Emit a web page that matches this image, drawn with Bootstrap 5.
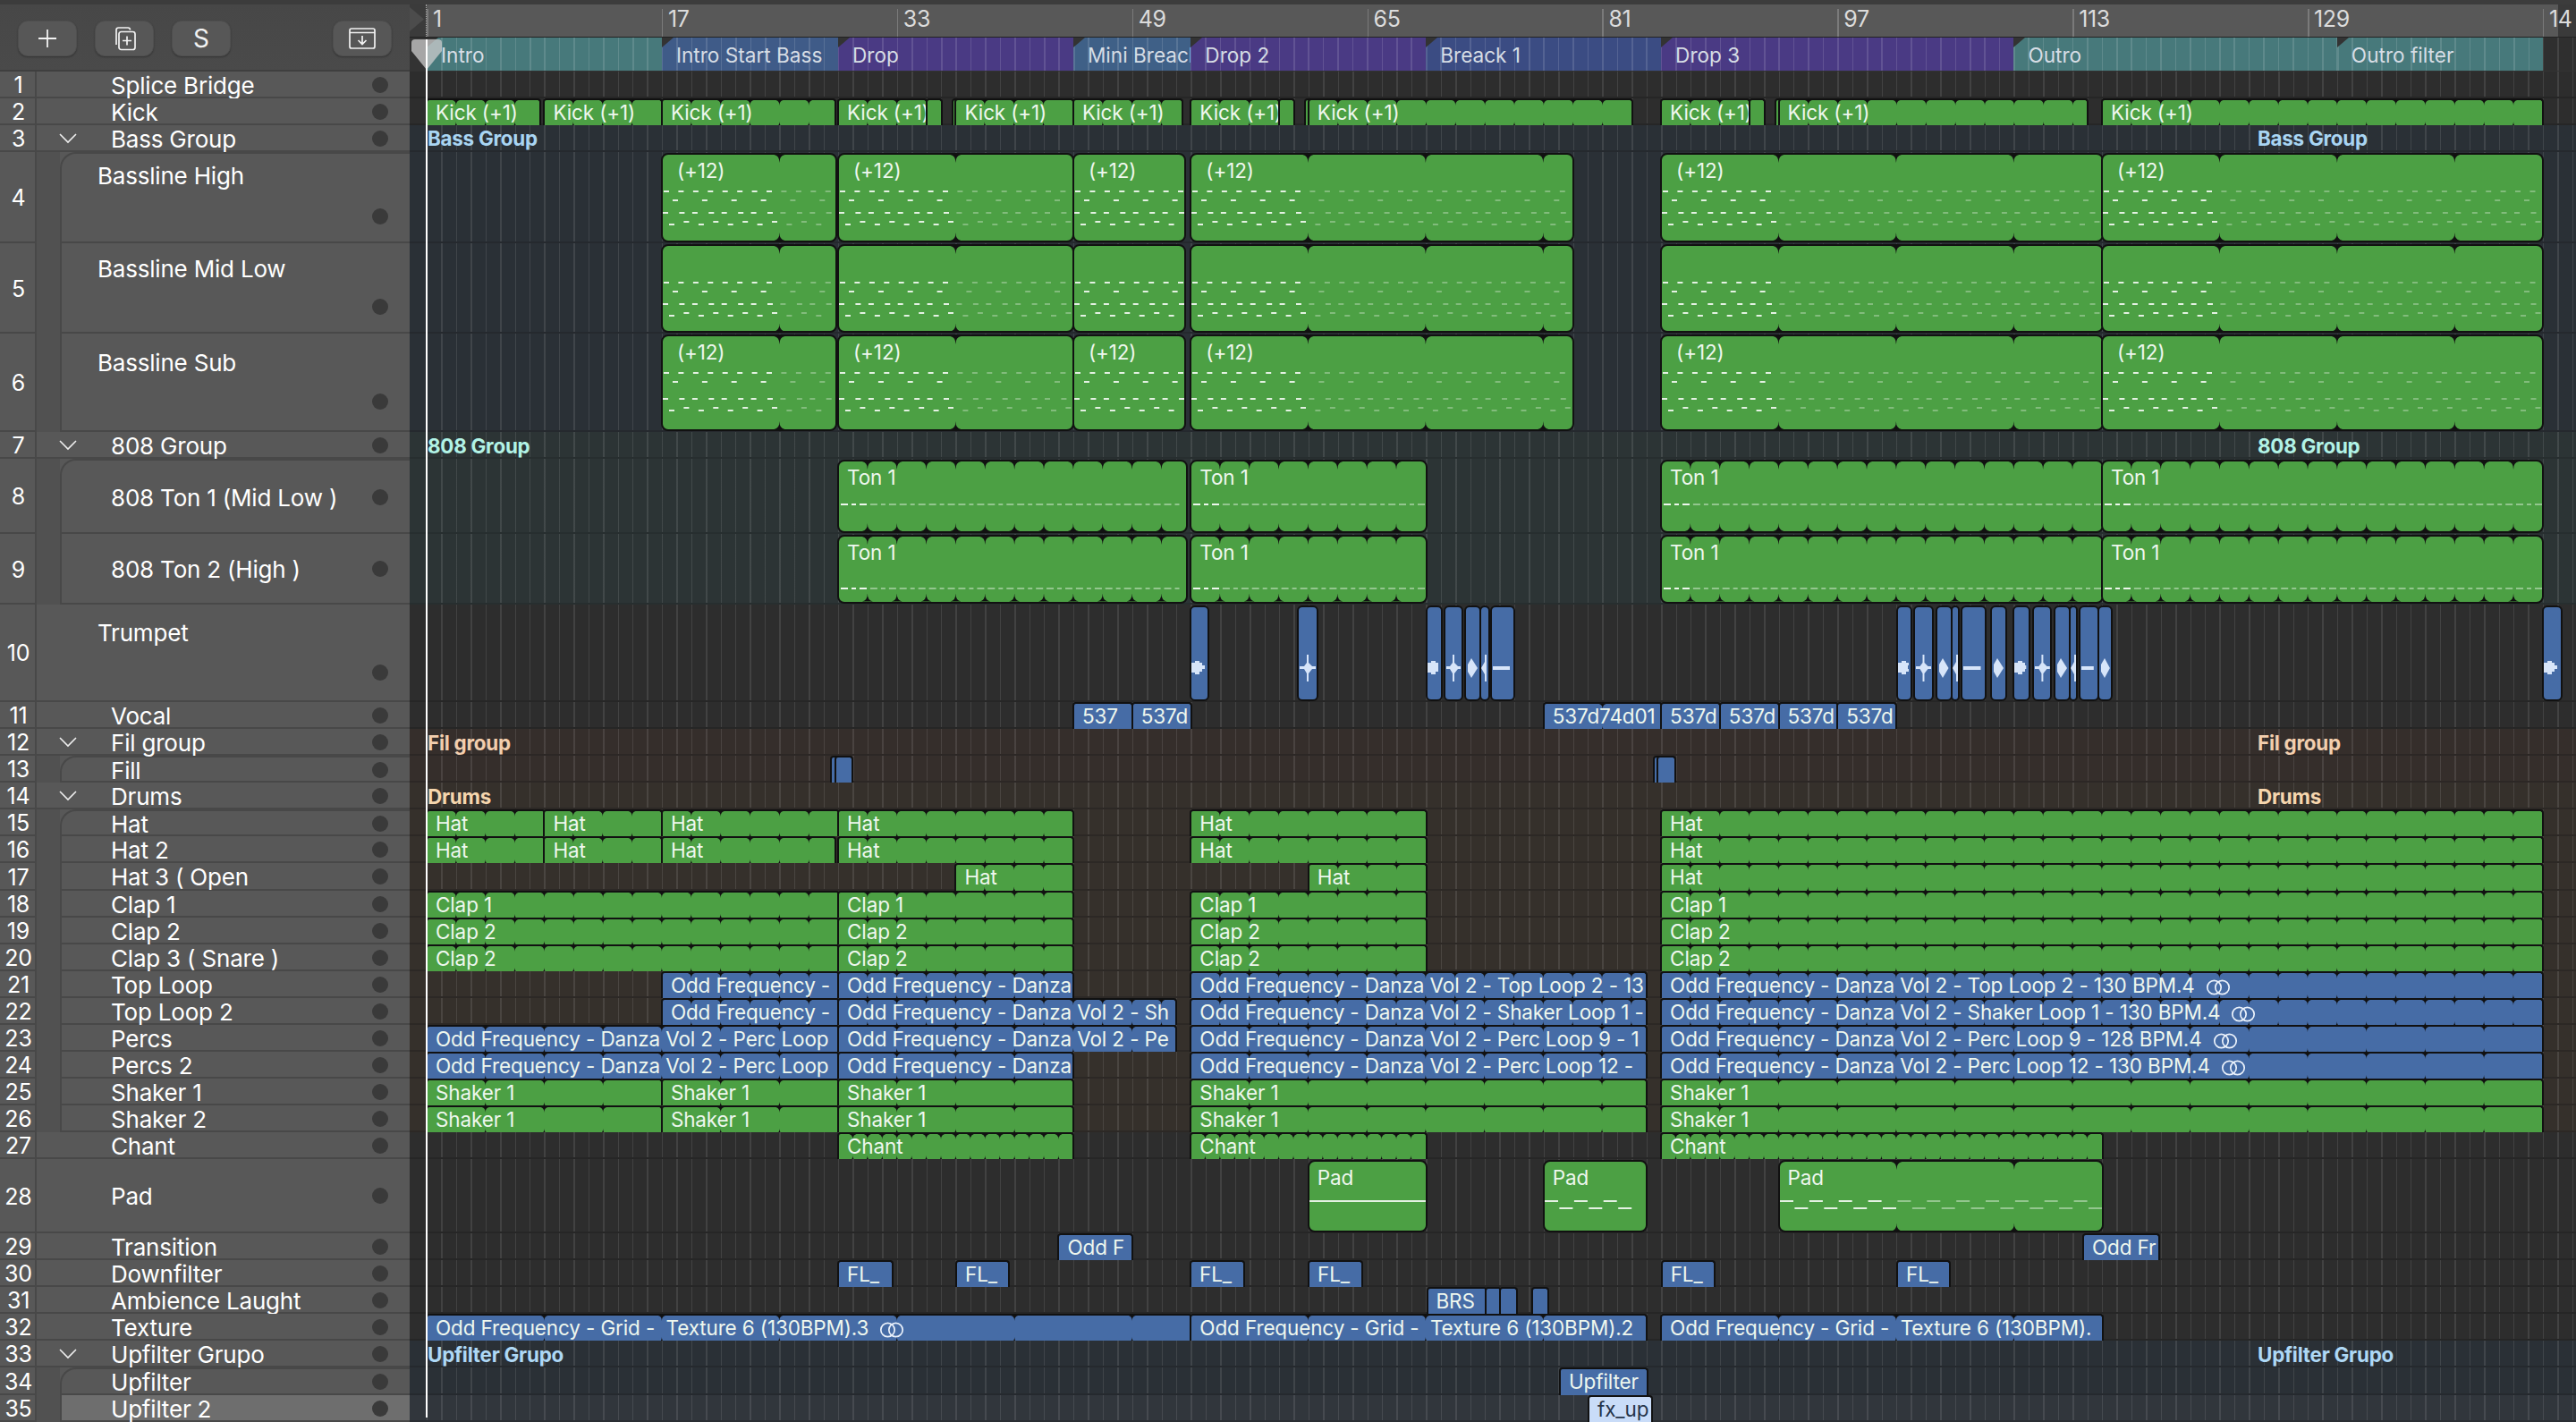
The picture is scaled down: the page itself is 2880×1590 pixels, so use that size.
<!doctype html>
<html lang="en"><head><meta charset="utf-8"><title>Arrangement</title>
<link href="https://cdn.jsdelivr.net/npm/bootstrap@5.3.0/dist/css/bootstrap.min.css" rel="stylesheet">
<style>
html,body{margin:0;background:#2d2d2d}
body{width:2880px;height:1590px;overflow:hidden;font-family:Inter,"Liberation Sans",sans-serif;color:#fff}
.app{width:2880px;height:1590px}
.side{width:458px;background:#585858}
.side-head{height:80px;background:linear-gradient(#474747,#4a4a4a);border-top:5px solid #3c3c3c;padding:0 20px;box-shadow:inset 0 -2px 0 #3f3f3f}
.tool-btn{width:66px;height:40px;background:#575757;border:1px solid #4f4f4f;border-radius:11px;box-shadow:0 1px 2px rgba(0,0,0,.3);color:#f2f2f2;font-size:28px;padding:0;line-height:1;--bs-btn-hover-bg:#575757}
.tool-gap{gap:20px}
.trk{font-size:26px;letter-spacing:-.2px}
.tk-num{width:41px;box-shadow:inset -2px -2px 0 #484848;flex:0 0 41px;font-size:25px;padding-top:2px}
.tk-band{width:26px;flex:0 0 26px;background:#515151}
.tk-body{padding-right:24px;box-shadow:inset 0 -2px 0 #484848;min-width:0;background:#585858}
.tk-kid{border-left:2px solid #484848;padding-left:55px}
.tk-kid.tk-top{border-top:2px solid #484848;border-top-left-radius:18px}
.tk-root{padding-left:83px;position:relative}
.tk-tall{padding-left:40px}
.tk-free{padding-left:68px}
.tk-name{white-space:nowrap;line-height:30px;padding-top:2px}
.tk-dot{width:18px;height:18px;border-radius:50%;background:#3a3a3a;flex:0 0 18px}
.tk-chev{position:absolute;left:25px;top:50%;margin-top:-6px}
.tk-sel{background:#6e6e6e}
.arr{width:2422px;overflow:hidden}
.rulerbar{height:42px;background:#585858;border-top:5px solid #3c3c3c;border-bottom:1px solid #222;padding-left:19px;position:relative}
.ruler-pad{position:absolute;left:0;top:0;bottom:0;width:19px;background:#3b3b3b;border-right:1px dotted #aaa}
.ruler-tri{position:absolute;left:0;top:3px}
.ruler-end{position:absolute;right:0;top:0;bottom:0;width:20px;background:#3a3a3a}
.tick{flex:0 0 262.88px;font-size:25px;color:#dcdcdc;padding-left:7px;line-height:32px;position:relative;letter-spacing:-.3px;white-space:nowrap}
.tick::before{content:"";position:absolute;left:0;top:5px;bottom:0;width:1.5px;background:#7a7a7a}
.markers{height:38px;padding-left:19px;background:#2f2f2f repeating-linear-gradient(90deg,transparent 0 2.57px,rgba(255,255,255,.1) 2.57px 4px,transparent 4px 16.43px);box-shadow:inset 19px 0 0 #333,inset 0 -1px 0 #333}
.mk{position:relative;overflow:hidden;flex:0 0 auto;height:37px;line-height:39px;padding-left:16px;font-size:22.6px;color:#d6dde5;white-space:nowrap;background-image:repeating-linear-gradient(90deg,rgba(255,255,255,.13) 0 1.5px,transparent 1.5px 16.43px)}
.mk::before{content:"";position:absolute;left:0;top:0;border-top:11px solid #333;border-right:13px solid transparent}
.mk-teal{background-color:#47797b}.mk-blue{background-color:#3f5b88}.mk-purple{background-color:#4a3a84}.mk-slate{background-color:#3f6087}.mk-ind{background-color:#3b4c83}
.lane{position:relative;--tint:#2d2d2d;--sep:#262626;background:linear-gradient(90deg,var(--tint) 19px,transparent 19px),repeating-linear-gradient(90deg,transparent 0 2.57px,rgba(255,255,255,.1) 2.57px 4px,transparent 4px 16.43px),var(--tint);box-shadow:inset 0 -2px 0 var(--sep)}
.lane-bass{--tint:#2a3036;--sep:#25292e}
.lane-eight{--tint:#2c3435;--sep:#272e2f}
.lane-fil{--tint:#352e2b;--sep:#2c2725}
.lane-drum{--tint:#35302b;--sep:#2c2825}
.lane-sel{--tint:#31363c;--sep:#2a2e33}
.lane-tag{position:absolute;top:1px;bottom:0;display:flex;align-items:center;font-size:22.4px;font-weight:700;white-space:nowrap;letter-spacing:-.25px}
.clip{position:absolute;top:0;bottom:0;overflow:hidden;border:2px solid #111;border-bottom:0;border-radius:4px 4px 0 0;font-size:22.5px;line-height:27px;color:#eef7ee;white-space:pre;padding-left:9px;letter-spacing:-.13px}
.clip-g{background:#4ca044}
.clip-b{background:#466ca6}
.clip-s{background:#c9dcf8;color:#26344a}
.clip-t{top:1px;bottom:1px;border-bottom:2px solid #111;border-radius:8px;padding-left:16px;line-height:36px}
.clip-near{padding-left:9px}
.clip-a{border-radius:6px;padding:0;top:1px;bottom:1px;border-bottom:2px solid #111}
.clip svg.ov{position:absolute;left:0;top:0;width:100%;height:100%}
.clip span{position:relative}
.loopmark{display:inline-block;vertical-align:-3px;margin-left:12px}
.playhead{position:absolute;left:18px;top:44px;width:2px;height:1541px;background:#fff;z-index:5}
.playcap{position:absolute;left:2px;top:44px;z-index:4}
</style></head>
<body>
<div class="app d-flex">
  <aside class="side flex-shrink-0" id="side">
    <div class="side-head d-flex align-items-center tool-gap">
      <button class="btn tool-btn d-flex align-items-center justify-content-center" type="button"><svg width="22" height="22" viewBox="0 0 22 22"><path d="M11 1v20M1 11h20" stroke="#f2f2f2" stroke-width="1.8"/></svg></button>
      <button class="btn tool-btn d-flex align-items-center justify-content-center" type="button"><svg width="28" height="28" viewBox="0 0 28 28" fill="none" stroke="#f2f2f2" stroke-width="1.7"><path d="M5 21V4.5Q5 2 7.5 2H18Q20.5 2 20.5 4.5"/><rect x="8" y="6.5" width="18" height="20" rx="2.5" fill="#575757"/><path d="M17 11.5v10M12 16.5h10"/></svg></button>
      <button class="btn tool-btn d-flex align-items-center justify-content-center" type="button">S</button>
      <button class="btn tool-btn d-flex align-items-center justify-content-center ms-auto" type="button"><svg width="32" height="26" viewBox="0 0 32 26" fill="none" stroke="#f2f2f2" stroke-width="1.7"><rect x="2" y="2" width="28" height="22" rx="2"/><path d="M2 6.5h28M16 10v9M11.5 15l4.5 4.5 4.5-4.5"/></svg></button>
    </div>
  </aside>
  <main class="arr position-relative" id="arr">
    <div class="rulerbar d-flex" id="ruler"><div class="ruler-pad"></div><svg class="ruler-tri" width="16" height="27" viewBox="0 0 16 27"><path d="M0 0L16 13.5 0 27Z" fill="#4c4c4c"/></svg><div class="ruler-end"></div></div>
    <div class="markers d-flex" id="markers"></div>
    <svg class="playcap" width="34" height="34" viewBox="0 0 34 34"><path d="M4 0H30Q34 0 34 4V13L17 34 0 13V4Q0 0 4 0Z" fill="rgba(205,205,205,.75)"/></svg>
    <div class="playhead"></div>
  </main>
</div>
<script>
const BAR=16.43, bx=v=>v>146?v-458:19+(v-1)*BAR;
const E=[80,109.5,139.5,169.5,271.5,373,483,513,597,675.5,784.5,815,845,875,905,935,965,995.5,1025.5,1055.5,1085.5,1115.5,1145.5,1175.5,1205.5,1235.5,1265.5,1295.5,1379,1409,1439,1469,1499,1529,1559.5,1589.5];
const T=[
['Splice Bridge'],['Kick'],['Bass Group','g'],['Bassline High','kt',8,21],['Bassline Mid Low','k',12,21],['Bassline Sub','k',16,25],
['808 Group','g'],['808 Ton 1 (Mid Low )','kt0'],['808 Ton 2 (High )','k0'],['Trumpet','t',15,24],['Vocal'],['Fil group','g'],['Fill','kt0'],
['Drums','g'],['Hat','kt0'],['Hat 2','k0'],['Hat 3 ( Open','k0'],['Clap 1','k0'],['Clap 2','k0'],['Clap 3 ( Snare )','k0'],['Top Loop','k0'],['Top Loop 2','k0'],
['Percs','k0'],['Percs 2','k0'],['Shaker 1','k0'],['Shaker 2','k0'],['Chant'],['Pad'],['Transition'],['Downfilter'],['Ambience Laught'],['Texture'],
['Upfilter Grupo','g'],['Upfilter','kt0'],['Upfilter 2','k0s']];
const chev='<svg class="tk-chev" width="20" height="12" viewBox="0 0 20 12"><path d="M1 1l9 9 9-9" fill="none" stroke="#eee" stroke-width="1.6"/></svg>';
let sh='';
T.forEach((t,i)=>{
  const h=E[i+1]-E[i], k=t[1]||'', kid=k[0]==='k';
  const nameSt=t[2]?` style="align-self:flex-start;margin-top:${t[2]}px"`:'';
  const dotSt=t[3]?` style="align-self:flex-end;margin-bottom:${t[3]}px"`:'';
  let bodyCls=kid?'tk-kid':'tk-root';
  if(k==='t')bodyCls='tk-free';
  if(k==='kt'||k==='kt0')bodyCls+=' tk-top';
  if(k==='kt'||k==='k')bodyCls+=' tk-tall';
  if(k==='k0s')bodyCls+=' tk-sel';
  sh+=`<div class="trk d-flex" style="height:${h}px"><div class="tk-num d-flex align-items-center justify-content-center">${i+1}</div>${kid?'<div class="tk-band"></div>':''}<div class="tk-body flex-grow-1 d-flex align-items-center ${bodyCls}">${k==='g'?chev:''}<span class="tk-name"${nameSt}>${t[0]}</span><span class="tk-dot ms-auto"${dotSt}></span></div></div>`;
});
document.getElementById('side').insertAdjacentHTML('beforeend',sh);

const rul=document.getElementById('ruler');
[1,17,33,49,65,81,97,113,129,'14'].forEach(n=>rul.insertAdjacentHTML('beforeend',`<div class="tick">${n}</div>`));
const mkr=document.getElementById('markers');
[['Intro',1,17,'teal'],['Intro Start Bass',17,29,'blue'],['Drop',29,45,'purple'],['Mini Breack',45,53,'slate'],['Drop 2',53,69,'purple'],['Breack 1',69,85,'ind'],['Drop 3',85,109,'purple'],['Outro',109,131,'teal'],['Outro filter',131,145,'teal']]
.forEach(m=>mkr.insertAdjacentHTML('beforeend',`<div class="mk mk-${m[3]}" style="width:${(m[2]-m[1])*BAR}px">${m[0]}</div>`));

const OF='Odd Frequency - Danza Vol 2 - ', GR='Odd Frequency - Grid -  Texture 6 (130BPM)';
const full4=[[1,17],[17,29],[29,45],[53,84],[85,145]];
const BASS=[[17,935],[29,45],[45,1325],[53,79],[85,115],[115,145]];
const TON=[[29,1327],[53,69],[85,115],[115,145]];
const HAT=[[1,9],[9,17],[17,29],[29,45],[53,69],[85,145]];
const CL=[[1,29],[29,45],[53,69],[85,145]];
const L={
2:{c:'g',p:2,t:'Kick (+1)',r:[[1,603],[9,17],[17,934],[29,35],[35,36,''],[1065,1069,''],[37,45],[45,1322],[53,59],[59,60,''],[1459,1463,''],[61,83],[85,91],[91,92,''],[1985,1989,''],[93,114],[115,145]]},
3:{tag:['Bass Group','#a9d5f3']},
4:{c:'g',p:8,t:'(+12)',tall:1,d:'bass',r:BASS,lift:0},
5:{c:'g',p:8,t:'',tall:1,d:'bass',r:BASS,lift:0},
6:{c:'g',p:8,t:'(+12)',tall:1,d:'bass',r:BASS,lift:5},
7:{tag:['808 Group','#b2f3e6']},
8:{c:'g',p:2,t:'Ton 1',tall:1,near:1,d:'ton',r:TON,dy:47},
9:{c:'g',p:2,t:'Ton 1',tall:1,near:1,d:'ton',r:TON,dy:57},
10:{c:'b',audio:[[1331,1351,'blob'],[1451,1473,'star'],[1595,1612,'blob'],[1615,1635,'star'],[1638,1655,'dia'],[1655,1665,'spike'],[1667,1693,'line'],[2121,2137,'blob'],[2140,2161,'star'],[2165,2181.5,'dia'],[2181.5,2190,'spike'],[2193,2219.5,'line'],[2226,2243,'dia'],[2250.7,2269,'blob'],[2272.7,2293.5,'star'],[2296.6,2313.7,'dia'],[2313.7,2322,'spike'],[2324.8,2345.6,'line'],[2345.6,2361.5,'dia'],[2843,2863.7,'blob']]},
11:{c:'b',p:4,t:'537d',r:[[45,49,'537'],[49,53],[77,85,'537d74d01'],[85,89],[89,93],[93,97],[97,101]]},
12:{tag:['Fil group','#f2ceae'],fil:1},
13:{c:'b',r:[[929,934,''],[934,952,''],[1848.5,1853,''],[1853,1872,'']],fil:1},
14:{tag:['Drums','#f5d6ae']},
15:{c:'g',p:2,t:'Hat',r:HAT},
16:{c:'g',p:2,t:'Hat',r:[[1,9],[9,17],[17,934],[29,45],[53,69],[85,145]]},
17:{c:'g',p:2,t:'Hat',r:[[37,45],[61,69],[85,145]]},
18:{c:'g',p:2,t:'Clap 1',r:CL},
19:{c:'g',p:2,t:'Clap 2',r:CL},
20:{c:'g',p:2,t:'Clap 2',r:CL},
21:{c:'b',p:2,r:[[17,29,'Odd Frequency - '],[29,45,'Odd Frequency - Danza'],[53,84,OF+'Top Loop 2 - 13'],[85,145,OF+'Top Loop 2 - 130 BPM.4',1]]},
22:{c:'b',p:2,r:[[17,29,'Odd Frequency - '],[29,52,OF+'Sh'],[53,84,OF+'Shaker Loop 1 -'],[85,145,OF+'Shaker Loop 1 - 130 BPM.4',1]]},
23:{c:'b',p:4,r:[[1,29,OF+'Perc Loop'],[29,52,OF+'Pe'],[53,84,OF+'Perc Loop 9 - 1'],[85,145,OF+'Perc Loop 9 - 128 BPM.4',1]]},
24:{c:'b',p:4,r:[[1,29,OF+'Perc Loop'],[29,45,'Odd Frequency - Danza'],[53,84,OF+'Perc Loop 12 - '],[85,145,OF+'Perc Loop 12 - 130 BPM.4',1]]},
25:{c:'g',p:4,t:'Shaker 1',r:full4},
26:{c:'g',p:4,t:'Shaker 1',r:full4},
27:{c:'g',p:1,t:'Chant',r:[[29,45],[53,69],[85,115]]},
28:{c:'g',p:8,t:'Pad',tall:1,near:1,d:'pad',r:[[61,69,undefined,0,'solid'],[77,84],[93,115]]},
29:{c:'b',r:[[44,49,'Odd F'],[2329,2413,'Odd Fr']]},
30:{c:'b',t:'FL_',r:[[937,997],[1069,1127],[1331,1390.5],[1463,1522],[1857.7,1916.5],[2121,2179]]},
31:{c:'b',r:[[1595.5,1661,'BRS'],[1661,1677,''],[1677,1695,''],[1713,1730,'']]},
32:{c:'b',p:8,r:[[1,53,GR+'.3',1],[53,84,GR+'.2'],[85,115,GR+'.']]},
33:{tag:['Upfilter Grupo','#aed8f5']},
34:{c:'b',r:[[1744,1841,'Upfilter']]},
35:{c:'s',r:[[1776,1846,'fx_up']]}
};
function notch(x,h,big){
  const w=big?6:4,d=big?9:6;
  return `<path d="M${x-w} 0Q${x} 1 ${x} ${d}Q${x} 1 ${x+w} 0Z" fill="#111"/><path d="M${x-w} ${h}Q${x} ${h-1} ${x} ${h-d}Q${x} ${h-1} ${x+w} ${h}Z" fill="#111"/>`;
}
function dash(x,y,w,o,h){return `<rect x="${x.toFixed(1)}" y="${y}" width="${w}" height="${h||2}" fill="#fff" opacity="${o}"/>`;}
function midiBass(w,per,lift){
  let s='';const n=Math.ceil(w/BAR);
  for(let i=0;i<n;i++){
    const o=i<per?.85:.3,x=i*BAR;
    if(x+8<w)s+=dash(x+1,40,6,o);
    if(i%2==0&&x+18<w)s+=dash(x+11,50,6,o);
    if(x+8<w)s+=dash(x+(i%2?2:0),64+lift,6,o);
    if(x+14<w)s+=dash(x+7,74+lift+(i%2?0:3),6,o);
  }
  return s;
}
function midiTon(w,dy){
  let s='';const per=32.86;
  for(let k=0;k*per<w;k++){
    const o=k==0?.9:.4,x=k*per;
    [[0,8],[12,5],[21,8]].forEach(a=>{if(x+a[0]+a[1]<w)s+=dash(x+a[0]+2,dy,a[1],o);});
  }
  return s;
}
function midiPad(w,solid){
  if(solid)return dash(0,43,w,.85);
  let s='';
  for(let i=0;i*BAR<w;i++){const o=i<8?.85:.4,x=i*BAR;
    if(i%2==0){if(x+15<w)s+=dash(x,43,15,o);}else{if(x<w)s+=dash(x,51,Math.min(15,w-x),o);}}
  return s;
}
function wave(t,w){
  const c=68,f='#d7e5f9';
  const m={blob:`M0 ${c-6}H4V${c-8}H9V${c-6}H12V${c-3}H${Math.min(w-3,15)}V${c+1}H12V${c+4}H9V${c+7}H4V${c+5}H0Z`,
   star:`M${w/2-1} ${c-15}H${w/2+1}V${c-6}L${w/2+5} ${c-2}H${w-1}V${c+1}H${w/2+5}L${w/2+1} ${c+6}V${c+15}H${w/2-1}V${c+6}L${w/2-4} ${c+1}H1V${c-2}H${w/2-4}L${w/2-1} ${c-6}Z`,
   dia:`M2 ${c-4}L6 ${c-11}L${Math.min(w-2,13)} ${c}L6 ${c+11}L2 ${c+4}Z`,
   spike:`M0 ${c}L4 ${c-7}V${c-15}H6V${c+15}H4V${c+7}Z`,
   line:`M1 ${c-2}H${w-4}V${c+2}H1Z`};
  return `<path d="${m[t]}" fill="${f}"/>`;
}
const loopSvg='<svg class="loopmark" width="28" height="18" viewBox="0 0 28 18" fill="none" stroke="#eaf1fb" stroke-width="1.7"><circle cx="9.5" cy="9" r="7.7"/><circle cx="18.5" cy="9" r="7.7"/></svg>';
let out='';
T.forEach((t,i)=>{
  const n=i+1,h=E[i+1]-E[i],cfg=L[n]||{};
  let cl='lane';
  if(n>=3&&n<=6||n>=33&&n<=34)cl+=' lane-bass';
  if(n>=7&&n<=9)cl+=' lane-eight';
  if(n==12||n==13)cl+=' lane-fil';
  if(n>=14&&n<=26)cl+=' lane-drum';
  if(n==35)cl+=' lane-sel';
  let inner='';
  if(cfg.tag){[20,2066].forEach(x=>{inner+=`<div class="lane-tag" style="left:${x}px;color:${cfg.tag[1]}">${cfg.tag[0]}</div>`;});}
  if(cfg.audio){cfg.audio.forEach(a=>{const x=bx(a[0])-1,w=bx(a[1])-x+1,iw=w-4;
    inner+=`<div class="clip clip-b clip-a" style="left:${x}px;width:${w}px"><svg class="ov">${wave(a[2],iw)}</svg></div>`;});}
  if(cfg.r){cfg.r.forEach(r=>{
    const x=bx(r[0])-1,w=bx(r[1])-x+1.5,iw=w-4,tall=cfg.tall,ih=tall?h-6:h;
    let svg='';
    if(cfg.p){for(let k=cfg.p;k*BAR<w-3;k+=cfg.p)svg+=notch(k*BAR-1,ih,tall);}
    if(cfg.d==='bass')svg=midiBass(iw,8,cfg.lift)+svg;
    if(cfg.d==='ton')svg=midiTon(iw,cfg.dy)+svg;
    if(cfg.d==='pad')svg=midiPad(iw,r[4]==='solid')+svg;
    const label=r[2]===undefined?(cfg.t||''):r[2];
    const cap=label?`<span>${label}</span>${r[3]?loopSvg:''}`:'';
    inner+=`<div class="clip clip-${cfg.c}${tall?' clip-t':''}${cfg.near?' clip-near':''}" style="left:${x}px;width:${w}px"><svg class="ov">${svg}</svg>${cap}</div>`;
  });}
  out+=`<div class="${cl}" style="height:${h}px">${inner}</div>`;
});
document.getElementById('markers').insertAdjacentHTML('afterend',out);
</script>
<script src="https://cdn.jsdelivr.net/npm/bootstrap@5.3.0/dist/js/bootstrap.bundle.min.js"></script>
</body></html>
